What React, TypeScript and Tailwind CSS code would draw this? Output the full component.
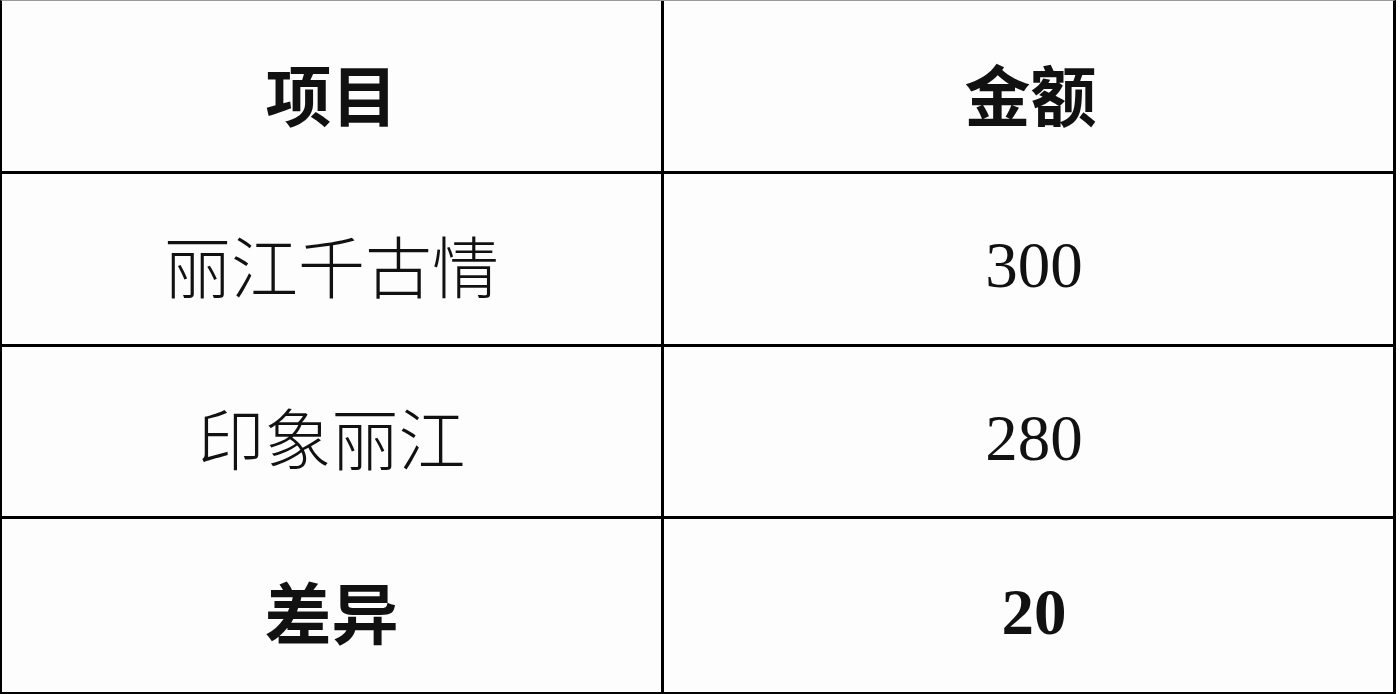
import * as React from "react";

const rows = [
    { item: "丽江千古情", amount: "300", bold: false, h: "h-[173px]" },
    { item: "印象丽江", amount: "280", bold: false, h: "h-[172px]" },
    { item: "差异", amount: "20", bold: true, h: "h-[173px]" },
];

const cjk = "font-['Noto_Sans_CJK_SC',sans-serif]";
const num = "font-['Liberation_Serif','Noto_Sans_CJK_SC',serif]";

export default function App() {
    return (
        <div className="min-h-screen w-[1400px] bg-[#fdfdfd]">
            <div className="w-[1396px] grid grid-cols-[662px_1fr] border-l-2 border-t border-r-[3px] border-b-[3px] border-t-[#9a9a9a] border-l-black border-r-black border-b-black text-[#111]">
                <div className={`h-[173px] border-r-[3px] border-b-[3px] border-black flex items-center justify-center pt-[12px] text-[66px] font-bold ${cjk}`}>
                    项目
                </div>
                <div className={`h-[173px] border-b-[3px] border-black flex items-center justify-center pt-[12px] pl-[4px] text-[66px] font-bold ${cjk}`}>
                    金额
                </div>
                {rows.map((row, i) => (
                    <React.Fragment key={row.item}>
                        <div className={`${row.h} border-r-[3px] border-black ${i < rows.length - 1 ? "border-b-[3px]" : ""} flex items-center justify-center pt-[10px] text-[67px] ${row.bold ? "font-bold" : "font-light"} ${cjk}`}>
                            {row.item}
                        </div>
                        <div className={`${row.h} border-black ${i < rows.length - 1 ? "border-b-[3px]" : ""} flex items-center justify-center pt-[14px] pl-[11px] text-[65px] ${row.bold ? "font-bold" : "font-normal"} ${num}`}>
                            {row.amount}
                        </div>
                    </React.Fragment>
                ))}
            </div>
        </div>
    );
}
